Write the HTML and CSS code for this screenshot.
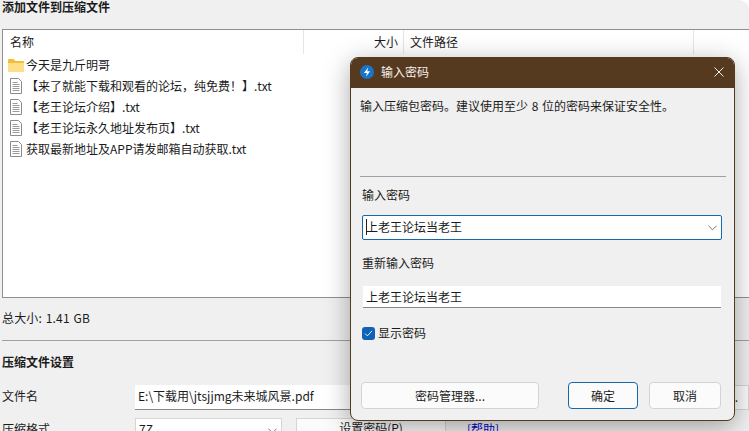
FILE: index.html
```html
<!DOCTYPE html>
<html lang="zh-CN">
<head>
<meta charset="utf-8">
<title>添加文件到压缩文件</title>
<link rel="stylesheet" href="styles.css">
</head>
<body>
<main class="main">
  <h1 class="heading">添加文件到压缩文件</h1>
  <section class="list">
    <div class="list-head">
      <div class="col col-name">名称</div>
      <div class="col col-size">大小</div>
      <div class="col col-path">文件路径</div>
      <div class="col col-rest"></div>
    </div>
    <div class="row">
      <svg class="ic-folder" viewBox="0 0 16 14"><path d="M0 2a1 1 0 0 1 1-1h4.500l2 2H15a1 1 0 0 1 1 1v9a1 1 0 0 1-1 1H1a1 1 0 0 1-1-1z" fill="#f3bd36"/><path d="M0 5h16v8a1 1 0 0 1-1 1H1a1 1 0 0 1-1-1z" fill="#fcdf87"/></svg>
      <span>今天是九斤明哥</span>
    </div>
    <div class="row">
      <svg class="ic-file" viewBox="0 0 12 16"><path d="M.5.500h8l3 3v12H.5z" fill="#fff" stroke="#8b8b8b"/><path d="M2.500 4.500h5M2.500 6.500h7M2.500 8.500h7M2.500 10.500h7M2.500 12.500h7" stroke="#9a9a9a"/></svg>
      <span>【来了就能下载和观看的论坛，纯免费！】.txt</span>
    </div>
    <div class="row">
      <svg class="ic-file" viewBox="0 0 12 16"><path d="M.5.500h8l3 3v12H.5z" fill="#fff" stroke="#8b8b8b"/><path d="M2.500 4.500h5M2.500 6.500h7M2.500 8.500h7M2.500 10.500h7M2.500 12.500h7" stroke="#9a9a9a"/></svg>
      <span>【老王论坛介绍】.txt</span>
    </div>
    <div class="row">
      <svg class="ic-file" viewBox="0 0 12 16"><path d="M.5.500h8l3 3v12H.5z" fill="#fff" stroke="#8b8b8b"/><path d="M2.500 4.500h5M2.500 6.500h7M2.500 8.500h7M2.500 10.500h7M2.500 12.500h7" stroke="#9a9a9a"/></svg>
      <span>【老王论坛永久地址发布页】.txt</span>
    </div>
    <div class="row">
      <svg class="ic-file" viewBox="0 0 12 16"><path d="M.5.500h8l3 3v12H.5z" fill="#fff" stroke="#8b8b8b"/><path d="M2.500 4.500h5M2.500 6.500h7M2.500 8.500h7M2.500 10.500h7M2.500 12.500h7" stroke="#9a9a9a"/></svg>
      <span>获取最新地址及APP请发邮箱自动获取.txt</span>
    </div>
  </section>
  <div class="total">总大小: 1.41 GB</div>
  <h2 class="subheading">压缩文件设置</h2>
  <div class="field field-name">
    <label class="field-label">文件名</label>
    <div class="filename">E:\下载用\jtsjjmg未来城风景.pdf</div>
    <div class="browse">...</div>
  </div>
  <div class="field field-format">
    <label class="field-label">压缩格式</label>
    <div class="format">7Z
      <svg class="chev" viewBox="0 0 10 6"><path d="M.5.500 5 5 9.500.500" fill="none" stroke="#666"/></svg>
    </div>
    <div class="setpw">设置密码(P)</div>
    <a class="help">[帮助]</a>
  </div>
</main>

<section class="dialog">
  <header class="title">
    <svg class="app-icon" viewBox="0 0 16 16"><circle cx="8" cy="8" r="8" fill="#1a74c8"/><path d="M9.500 2.500 4.500 9H8l-1.200 4.500L11.500 7H8.300z" fill="#fff"/></svg>
    <span class="title-text">输入密码</span>
    <svg class="close" viewBox="0 0 10 10"><path d="M.5.500l9 9M9.500.500l-9 9" stroke="#f2eeea" fill="none"/></svg>
  </header>
  <div class="body">
    <p class="hint">输入压缩包密码。建议使用至少 8 位的密码来保证安全性。</p>
    <hr class="rule">
    <div class="lab">输入密码</div>
    <div class="input focused"><span class="caret"></span><span>上老王论坛当老王</span>
      <svg class="chev" viewBox="0 0 10 6"><path d="M.5.500 5 5 9.500.500" fill="none" stroke="#666"/></svg>
    </div>
    <div class="lab lab2">重新输入密码</div>
    <div class="input plain"><span>上老王论坛当老王</span></div>
    <div class="check">
      <span class="box"><svg viewBox="0 0 10 8"><path d="M1 4l2.700 2.700L9 1" fill="none" stroke="#fff"/></svg></span>
      <span>显示密码</span>
    </div>
    <div class="actions">
      <button class="btn btn-mgr">密码管理器...</button>
      <button class="btn btn-ok">确定</button>
      <button class="btn btn-cancel">取消</button>
    </div>
  </div>
</section>
</body>
</html>
```

FILE: styles.css
```css
html, body { margin: 0; padding: 0; }
body {
  width: 749px; height: 431px; overflow: hidden; position: relative;
  background: #fff; color: #1b1b1b;
  font: 12px "Noto Sans CJK SC", "Liberation Sans", sans-serif;
}
.main {
  display: flex; flex-direction: column; box-sizing: border-box; height: 431px; overflow: hidden;
  padding-left: 2px; background: #f0f0f0; border-top-right-radius: 10px;
}
.heading { flex: none; margin: 0; font-size: 12px; font-weight: 700; line-height: 14px; height: 29px; }
.list { flex: none; box-sizing: border-box; background: #fff; border: 1px solid #8f8f8f; border-right: 0; height: 269px; }
.list-head { display: flex; height: 24px; }
.col { padding-top: 3px; line-height: 18px; border-right: 1px solid #e5e5e5; box-sizing: border-box; }
.col-name { width: 301px; padding-left: 7px; }
.col-size { width: 100px; text-align: right; padding-right: 5px; }
.col-path { width: 290px; padding-left: 6px; }
.col-rest { flex: 1; border: 0; }
.row { display: flex; align-items: center; height: 21px; padding-left: 5px; gap: 2px; white-space: nowrap; }
.ic-folder { width: 16px; height: 14px; flex: none; }
.ic-file { width: 12px; height: 16px; flex: none; margin: 0 2px; }
.total { flex: none; height: 31px; line-height: 18px; padding-top: 11px; border-bottom: 1px solid #a0a0a0; box-sizing: content-box; word-spacing: 1px; letter-spacing: .15px; }
.subheading { flex: none; margin: 0; font-size: 12px; font-weight: 700; line-height: 18px; padding-top: 12px; height: 32px; }
.field { flex: none; display: flex; }
.field-label { width: 133px; line-height: 18px; }
.field-name { height: 25px; align-items: flex-start; }
.field-name .field-label { margin-top: 2px; }
.filename { width: 570px; height: 25px; background: #fff; border-bottom: 1px solid #888; line-height: 22px; padding-left: 3px; box-sizing: border-box; }
.browse { width: 32px; height: 25px; margin-left: 12px; background: #fbfbfb; border: 1px solid #d5d5d5; box-sizing: border-box; text-align: center; line-height: 22px; }
.field-format { margin-top: 8px; height: 30px; align-items: flex-start; }
.field-format .field-label { margin-top: 2px; }
.format { position: relative; width: 147px; height: 26px; background: #fff; border: 1px solid #d5d5d5; box-sizing: border-box; padding: 1px 0 0 3px; line-height: 18px; }
.setpw { width: 150px; height: 26px; margin-left: 14px; background: #fbfbfb; border: 1px solid #d5d5d5; box-sizing: border-box; text-align: center; line-height: 18px; }
.help { margin: 2px 0 0 21px; color: #0000c8; line-height: 18px; }

.dialog {
  position: absolute; left: 350px; top: 57px; width: 385px; height: 364px; box-sizing: border-box;
  background: #f0f0f0; border: 1px solid #55391f; border-radius: 8px; overflow: hidden;
  box-shadow: 0 6px 26px rgba(0,0,0,.34);
  display: flex; flex-direction: column;
}
.title { flex: none; box-sizing: border-box; height: 30px; padding: 0 10px 3px 9px; background: #553a20; color: #f5f1ed; display: flex; align-items: center; }
.app-icon { width: 14px; height: 14px; margin-right: 7px; }
.title-text { flex: 1; }
.close { width: 10px; height: 10px; }
.body { flex: 1; display: flex; flex-direction: column; padding: 0 9px; }
.hint { margin: 9px 0 0; line-height: 18px; height: 79px; word-spacing: 1px; }
.rule { margin: 0; border: 0; border-top: 1px solid #a0a0a0; width: 366px; }
.lab { line-height: 18px; margin: 9px 0 0 2px; }
.lab2 { margin-top: 14px; }
.input { background: #fff; display: flex; align-items: center; box-sizing: border-box; position: relative; }
.focused { width: 360px; height: 25px; margin: 11px 0 0 2px; border: 1px solid #1668ad; border-radius: 2px; padding: 0 0 2px 3px; }
.caret { width: 1px; height: 16px; background: #222; margin-right: -1px; }
.chev { position: absolute; right: 4px; top: 9px; width: 9px; height: 6px; }
.plain { width: 358px; height: 22px; margin: 14px 0 0 3px; border-bottom: 1px solid #888; padding-left: 3px; }
.check { display: flex; align-items: center; gap: 3px; margin: 16px 0 0 2px; line-height: 18px; }
.box { width: 13px; height: 13px; background: #0e63b8; border-radius: 3px; display: flex; align-items: center; justify-content: center; }
.box svg { width: 9px; height: 7px; }
.actions { display: flex; margin: 40px 0 0 1px; }
.btn { font: inherit; color: inherit; height: 27px; background: #fbfbfb; border: 1px solid #d3d3d3; border-radius: 4px; padding: 0; box-sizing: border-box; }
.btn-mgr { width: 178px; }
.btn-ok { width: 70px; margin-left: 29px; border-color: #1668ad; }
.btn-cancel { width: 72px; margin-left: 11px; }
```
